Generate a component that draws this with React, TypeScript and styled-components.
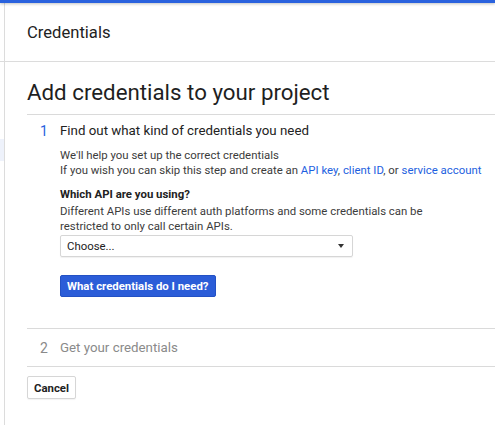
import React from 'react';
import styled, { createGlobalStyle } from 'styled-components';

const GlobalStyle = createGlobalStyle`
  html, body {
    margin: 0;
    padding: 0;
    background: #fff;
  }
  body {
    font-family: Roboto, "Liberation Sans", Arial, sans-serif;
    color: #212121;
    overflow: hidden;
  }
`;

const Page = styled.div`
  width: 495px;
  height: 425px;
  display: flex;
  flex-direction: column;
  overflow: hidden;
`;

const TopBar = styled.div`
  height: 3px;
  flex: none;
  background: #2a62de;
  box-shadow: 0 1px 3px rgba(0, 0, 0, 0.25);
  position: relative;
  z-index: 1;
`;

const Body = styled.div`
  flex: 1;
  display: flex;
`;

const Sidebar = styled.div`
  width: 4px;
  flex: none;
  border-right: 1px solid #dcdcdc;
  display: flex;
  flex-direction: column;
`;

const SidebarTop = styled.div`
  height: 58px;
  border-bottom: 1px solid #dcdcdc;
`;

const SidebarItem = styled.div<{ $active?: boolean }>`
  height: 22px;
  margin-top: ${p => (p.$active ? '77px' : '0')};
  background: ${p => (p.$active ? '#eef2fb' : 'transparent')};
`;

const Main = styled.div`
  flex: 1;
  display: flex;
  flex-direction: column;
`;

const Header = styled.div`
  height: 58px;
  border-bottom: 1px solid #dcdcdc;
  display: flex;
  align-items: center;
  padding-left: 22px;
  font-size: 16.6px;
  color: #222;
`;

const Content = styled.div`
  padding-left: 22px;
`;

const PageTitle = styled.h1`
  margin: 13px 0 0;
  font-size: 22.3px;
  line-height: 34px;
  font-weight: 400;
  color: #1f1f1f;
  padding-bottom: 5px;
  border-bottom: 1px solid #dadada;
`;

const Step = styled.div`
  display: grid;
  grid-template-columns: 33px 1fr;
  border-bottom: 1px solid #dadada;
`;

const StepNumber = styled.div<{ $active?: boolean }>`
  padding-left: 13px;
  font-size: 14px;
  line-height: 20px;
  color: ${p => (p.$active ? '#2a62de' : '#8a8a8a')};
`;

const StepTitle = styled.div<{ $active?: boolean; $padBottom?: string }>`
  font-size: 13.3px;
  line-height: 20px;
  padding-bottom: ${p => p.$padBottom ?? '0'};
  color: ${p => (p.$active ? '#222' : '#8a8a8a')};
`;

const StepHead = styled.div<{ $pad: string }>`
  display: contents;
  & > * {
    padding-top: ${p => p.$pad};
  }
`;

const StepBody = styled.div`
  grid-column: 2;
  padding: 7px 0 31px;
  font-size: 11.4px;
  line-height: 15px;
  color: #3c3c3c;
`;

const Para = styled.p`
  margin: 0;
`;

const Label = styled.div`
  margin-top: 8px;
  font-weight: 700;
  color: #222;
  line-height: 16px;
`;

const Hint = styled.p`
  margin: 2px 0 0;
`;

const Link = styled.a`
  color: #1d5fe0;
  text-decoration: none;
`;

const Select = styled.div`
  margin-top: 1px;
  width: 277px;
  height: 20px;
  border: 1px solid #d6d6d6;
  border-radius: 2px;
  box-shadow: 0 1px 1px rgba(0, 0, 0, 0.06);
  display: flex;
  align-items: center;
  justify-content: space-between;
  padding: 0 8px 0 6px;
  box-sizing: content-box;
  color: #222;
`;

const Caret = styled.span`
  width: 0;
  height: 0;
  border-left: 3.5px solid transparent;
  border-right: 3.5px solid transparent;
  border-top: 4px solid #333;
`;

const PrimaryButton = styled.button`
  margin-top: 18px;
  display: block;
  height: 22px;
  padding: 0 6px;
  border: 1px solid #2351c4;
  border-radius: 2px;
  background: #2b5dd8;
  color: #fff;
  font-family: inherit;
  font-size: 11.4px;
  font-weight: 700;
`;

const Footer = styled.div`
  padding-top: 9px;
`;

const SecondaryButton = styled.button`
  height: 23px;
  padding: 0 6px;
  border: 1px solid #d6d6d6;
  border-radius: 2px;
  background: #fff;
  color: #222;
  font-family: inherit;
  font-size: 11.4px;
  font-weight: 700;
  box-shadow: 0 1px 1px rgba(0, 0, 0, 0.05);
`;

const App: React.FC = () => {
  return (
    <Page>
      <GlobalStyle />
      <TopBar />
      <Body>
        <Sidebar>
          <SidebarTop />
          <SidebarItem $active />
        </Sidebar>
        <Main>
          <Header>Credentials</Header>
          <Content>
            <PageTitle>Add credentials to your project</PageTitle>
            <Step>
              <StepHead $pad="6px">
                <StepNumber $active>1</StepNumber>
                <StepTitle $active>Find out what kind of credentials you need</StepTitle>
              </StepHead>
              <StepBody>
                <Para>We'll help you set up the correct credentials</Para>
                <Para>
                  If you wish you can skip this step and create an <Link href="#">API key</Link>,{' '}
                  <Link href="#">client ID</Link>, or <Link href="#">service account</Link>
                </Para>
                <Label>Which API are you using?</Label>
                <Hint>
                  Different APIs use different auth platforms and some credentials can be
                  <br />
                  restricted to only call certain APIs.
                </Hint>
                <Select>
                  <span>Choose...</span>
                  <Caret />
                </Select>
                <PrimaryButton>What credentials do I need?</PrimaryButton>
              </StepBody>
            </Step>
            <Step>
              <StepHead $pad="9px">
                <StepNumber>2</StepNumber>
                <StepTitle $padBottom="8px">Get your credentials</StepTitle>
              </StepHead>
            </Step>
            <Footer>
              <SecondaryButton>Cancel</SecondaryButton>
            </Footer>
          </Content>
        </Main>
      </Body>
    </Page>
  );
};

export default App;
